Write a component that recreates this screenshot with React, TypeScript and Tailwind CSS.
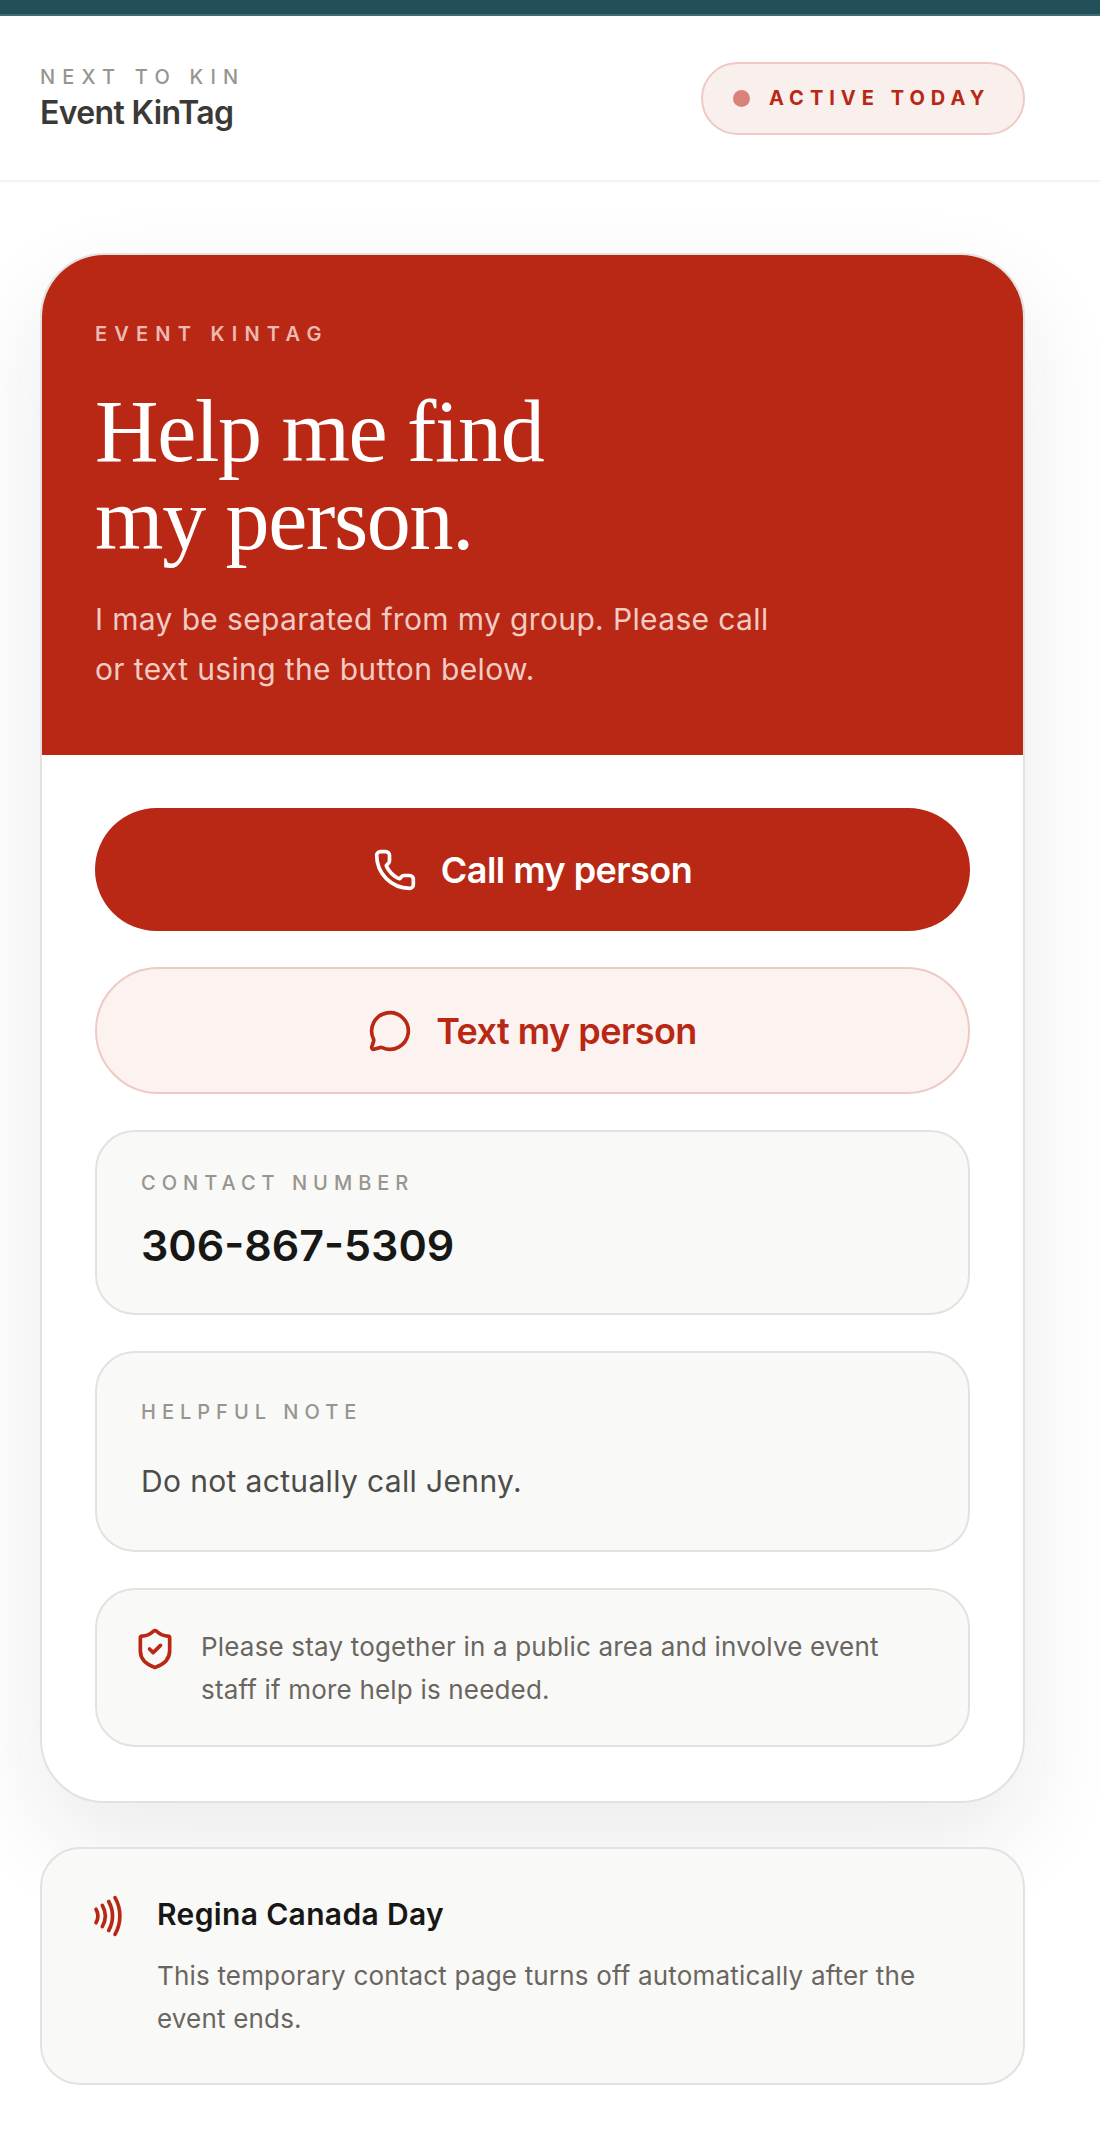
import { Phone, MessageCircle, ShieldCheck, Nfc } from "lucide-react";

export default function App() {
  return (
    <div className="min-h-[2144px] bg-white font-['Inter','Liberation_Sans',sans-serif]">
      <div className="h-4 border-b-2 border-[#3f6d75] bg-[#234f59]" />
      <header className="flex h-[166px] items-center justify-between border-b-2 border-[#f3f3f2] pr-[75px] pl-10">
        <div>
          <div className="text-[20px] leading-[30px] font-medium tracking-[0.36em] text-[#98958f]">NEXT TO KIN</div>
          <div className="text-[32px] leading-[42px] font-semibold tracking-[-0.02em] text-[#3a3936]">Event KinTag</div>
        </div>
        <div className="flex h-[73px] w-[324px] items-center gap-[19px] rounded-full border-2 border-[#efc9c4] bg-[#f9efed] pl-[30px]">
          <span className="h-[17px] w-[17px] rounded-full bg-[#d9827a]" />
          <span className="text-[20px] font-bold tracking-[0.3em] text-[#b82814]">ACTIVE TODAY</span>
        </div>
      </header>
      <main className="flex flex-col gap-[44px] pt-[71px] pr-[75px] pl-10">
        <section className="overflow-hidden rounded-[64px] border-2 border-[#e2e2e0] bg-white shadow-[0_40px_100px_rgba(30,30,30,0.09)]">
          <div className="h-[500px] bg-[#b82814] px-[53px] pt-[64px]">
            <div className="text-[20px] leading-[30px] font-semibold tracking-[0.36em] text-[#eeb9b2]">EVENT KINTAG</div>
            <h1 className="mt-[39px] font-['Liberation_Serif',serif] text-[88px] leading-[88px] tracking-[-0.015em] text-white">
              Help me find
              <br />
              my person.
            </h1>
            <p className="mt-[30px] text-[30px] leading-[50px] tracking-[0.36px] text-[#f3cbc5]">
              I may be separated from my group. Please call
              <br />
              or text using the button below.
            </p>
          </div>
          <div className="flex flex-col gap-[36px] px-[53px] pt-[53px] pb-[54px]">
            <button className="flex h-[123px] items-center justify-center gap-[24px] rounded-[62px] bg-[#b82814] text-[36px] font-semibold tracking-[-0.015em] text-white">
              <Phone size={44} strokeWidth={2} />
              Call my person
            </button>
            <button className="flex h-[127px] items-center justify-center gap-[24px] rounded-[64px] border-2 border-[#efc9c4] bg-[#fcf3f1] text-[36px] font-semibold tracking-[-0.015em] text-[#b82814]">
              <MessageCircle size={44} strokeWidth={2} />
              Text my person
            </button>
            <div className="h-[185px] rounded-[40px] border-2 border-[#e2e2e0] bg-[#f9f9f7] px-[44px] pt-[36px]">
              <div className="text-[20px] leading-[30px] font-medium tracking-[0.3em] text-[#98958f]">CONTACT NUMBER</div>
              <div className="mt-[17px] text-[43px] leading-[60px] font-semibold text-[#171715]">306-867-5309</div>
            </div>
            <div className="h-[201px] rounded-[40px] border-2 border-[#e2e2e0] bg-[#f9f9f7] px-[44px] pt-[44px]">
              <div className="text-[20px] leading-[30px] font-medium tracking-[0.3em] text-[#98958f]">HELPFUL NOTE</div>
              <div className="mt-[30px] text-[30px] leading-[48px] tracking-[0.35px] text-[#4d4c48]">Do not actually call Jenny.</div>
            </div>
            <div className="flex h-[159px] gap-[24px] rounded-[40px] border-2 border-[#e2e2e0] bg-[#f9f9f7] pt-[35px] pl-[37px]">
              <ShieldCheck size={44} strokeWidth={2} className="mt-[2px] -ml-[1px] shrink-0 text-[#b82814]" />
              <p className="text-[26px] leading-[43px] tracking-[0.18px] text-[#6a665f]">
                Please stay together in a public area and involve event
                <br />
                staff if more help is needed.
              </p>
            </div>
          </div>
        </section>
        <section className="flex h-[238px] gap-[28px] rounded-[40px] border-2 border-[#e2e2e0] bg-[#f9f9f7] pt-[45px] pl-[43px]">
          <Nfc size={44} strokeWidth={2} className="shrink-0 text-[#b82814]" />
          <div>
            <div className="text-[30px] leading-[40px] font-semibold tracking-[0.35px] text-[#171715]">Regina Canada Day</div>
            <p className="mt-[20px] text-[26px] leading-[43px] tracking-[0.18px] text-[#6a665f]">
              This temporary contact page turns off automatically after the
              <br />
              event ends.
            </p>
          </div>
        </section>
      </main>
    </div>
  );
}
